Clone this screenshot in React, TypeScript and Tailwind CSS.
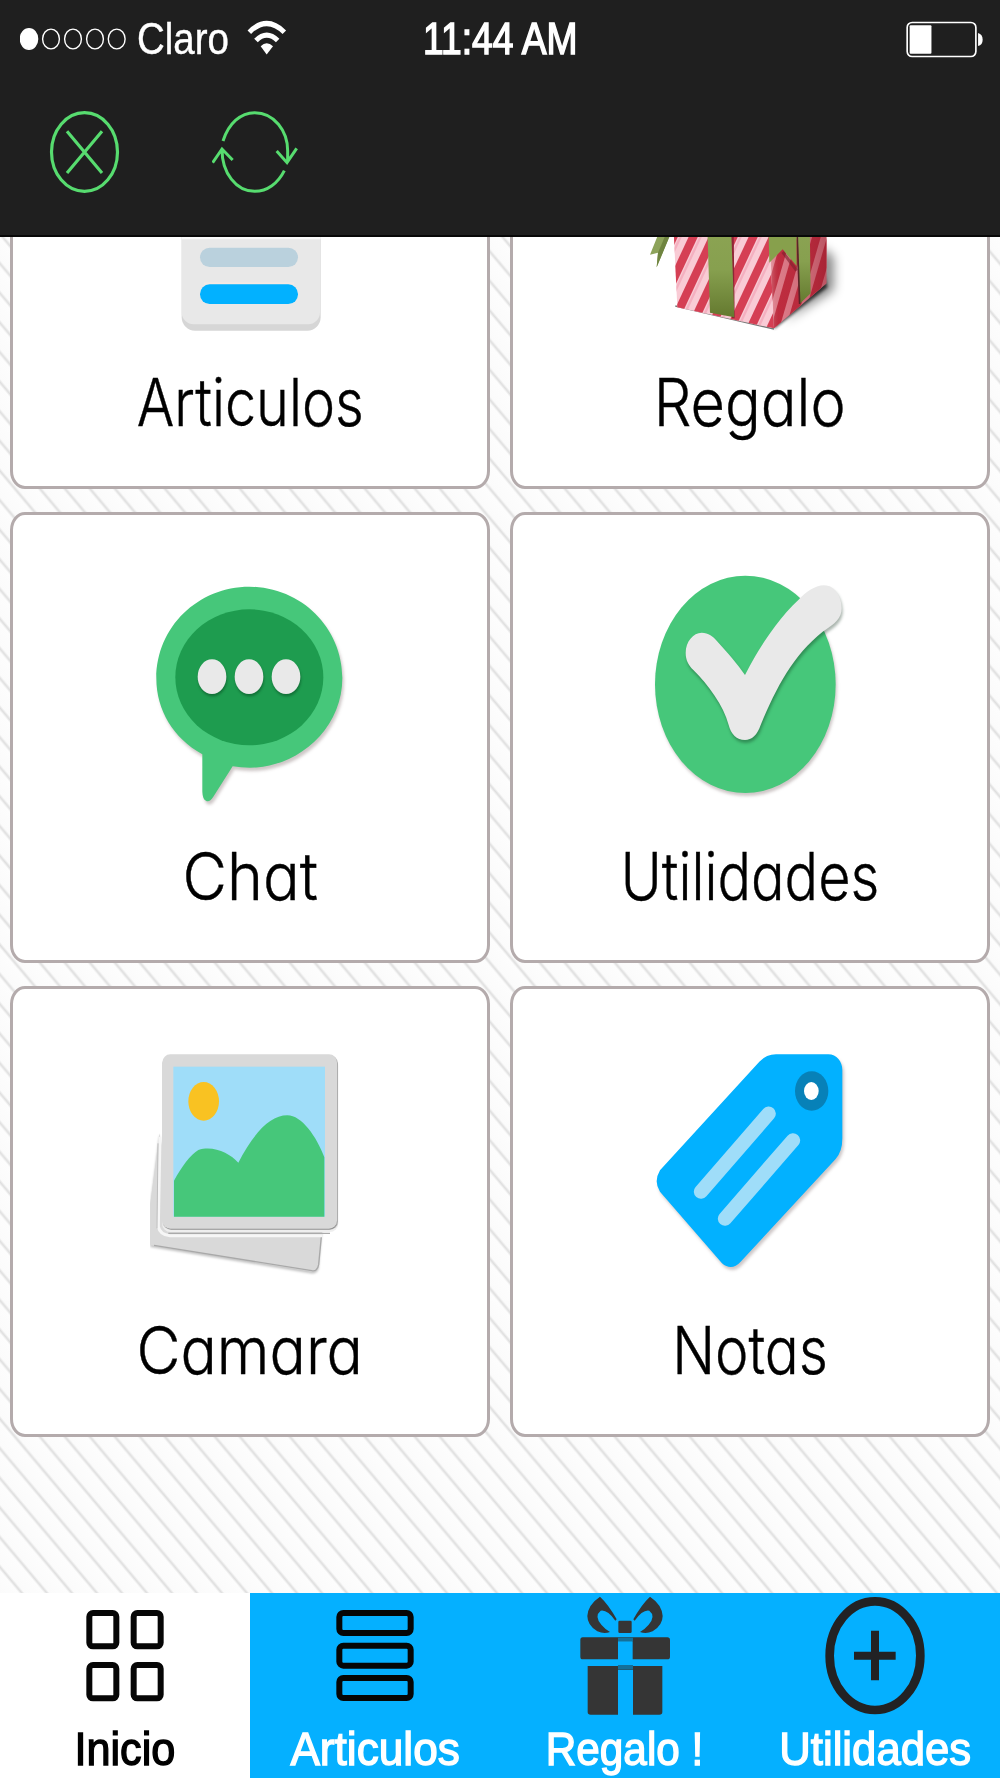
import React from "react";

function ArticlesArt() {
  return (
    <svg viewBox="450 -402 600 720" className="h-[240px] w-[200px]">
      <rect x="545" y="-300" width="417" height="602" rx="40" fill="#d6d6d6" />
      <rect x="545" y="-310" width="415" height="593" rx="36" fill="#e8e8e8" />
      <path d="M545 24H962" stroke="#fafafa" strokeWidth="8" />
      <rect x="600" y="53" width="294" height="58" rx="29" fill="#bad1dd" />
      <path d="M612 160H882" stroke="#f6e9e3" strokeWidth="5" />
      <rect x="600" y="163" width="294" height="59" rx="29" fill="#02b1ff" />
    </svg>
  );
}

function PresentArt() {
  const front = [380, 440, 500, 560, 620, 680, 740, 800, 860];
  const side = [770, 815, 860, 905, 950, 995];
  return (
    <svg viewBox="450 -402 600 720" className="h-[240px] w-[200px] overflow-visible">
      <defs>
        <clipPath id="gift-front">
          <path d="M516 -100L532 232L822 295L803 -100Z" />
        </clipPath>
        <clipPath id="gift-side">
          <path d="M803 -100L822 295L980 160V-100Z" />
        </clipPath>
        <linearGradient id="ribbon" x1="0" y1="0" x2="0" y2="1">
          <stop offset="0" stopColor="#8fa656" />
          <stop offset="0.6" stopColor="#87a04f" />
          <stop offset="1" stopColor="#64792f" />
        </linearGradient>
        <linearGradient id="side-shade" x1="0" y1="0" x2="1" y2="0">
          <stop offset="0" stopColor="#fff" stopOpacity="0.45" />
          <stop offset="0.18" stopColor="#c23246" stopOpacity="0.1" />
          <stop offset="1" stopColor="#8c1a2a" stopOpacity="0.45" />
        </linearGradient>
        <filter id="gift-blur" x="-50%" y="-50%" width="200%" height="200%">
          <feGaussianBlur stdDeviation="16" />
        </filter>
        <filter id="gift-blur-tight" x="-50%" y="-50%" width="200%" height="200%">
          <feGaussianBlur stdDeviation="5" />
        </filter>
      </defs>
      <path d="M850 275L1000 180V80L960 50V150Z" fill="#000" opacity="0.5" filter="url(#gift-blur)" />
      <path d="M822 297L982 172L970 120L820 250Z" fill="#000" opacity="0.7" filter="url(#gift-blur-tight)" />
      <path d="M526 228L822 297" stroke="#777" strokeWidth="5" />
      <g clipPath="url(#gift-front)">
        <rect x="500" y="-100" width="340" height="400" fill="#f9cbd5" />
        {front.map((x) => (
          <path key={x} d={`M${x} 320L${x + 210} -130`} stroke="#d53f54" strokeWidth="25" />
        ))}
        {front.map((x) => (
          <path key={x} d={`M${x + 22} 320L${x + 232} -130`} stroke="#f4b0c0" strokeWidth="7" />
        ))}
      </g>
      <g clipPath="url(#gift-side)">
        <rect x="795" y="-100" width="190" height="400" fill="#df8591" />
        {side.map((x) => (
          <path key={x} d={`M${x} 330L${x + 130} -120`} stroke="#bd2c3e" strokeWidth="25" />
        ))}
        <rect x="803" y="-100" width="180" height="400" fill="url(#side-shade)" />
      </g>
      <path d="M690 0L696 265H704L701 0Z" fill="#8e2535" />
      <path d="M619 -100L630 248L703 262L690 -100Z" fill="url(#ribbon)" />
      <path d="M891 -100L898 223L932 190L928 -100Z" fill="url(#ribbon)" />
      <path d="M891 0L899 222" stroke="#5b2529" strokeWidth="5" />
      <path d="M848 66L890 122" stroke="#7c1f2c" strokeWidth="9" opacity="0.6" />
      <path d="M804 -60H889L890 108L848 58L808 98Z" fill="#87a04c" />
      <path d="M480 0H516L470 112L474 68L450 74Z" fill="#8da35a" />
      <path d="M511 14L470 112L474 68L497 14Z" fill="#6f8440" />
    </svg>
  );
}

function ChatArt() {
  return (
    <svg viewBox="450 210 600 720" className="h-[240px] w-[200px]">
      <g className="[filter:drop-shadow(5px_10px_4px_rgba(60,30,30,0.25))]">
        <path
          d="M748 260C905 260 1027 385 1027 533C1027 690 890 803 750 803Q722 803 698 799L640 890Q628 908 618 902Q608 898 607 875V763C520 715 469 630 469 535C469 380 595 260 748 260Z"
          fill="#46c77a"
        />
      </g>
      <ellipse cx="748" cy="532" rx="222" ry="204" fill="#1e9c4f" />
      <g fill="#e9e9e9" className="[filter:drop-shadow(2px_7px_3px_rgba(0,50,20,0.4))]">
        <ellipse cx="636" cy="530" rx="43" ry="52" />
        <ellipse cx="747" cy="530" rx="43" ry="52" />
        <ellipse cx="858" cy="530" rx="43" ry="52" />
      </g>
    </svg>
  );
}

function CheckArt() {
  return (
    <svg viewBox="450 210 600 720" className="h-[240px] w-[200px]">
      <ellipse
        cx="736"
        cy="553"
        rx="271"
        ry="326"
        fill="#46c77a"
        className="[filter:drop-shadow(4px_9px_4px_rgba(60,30,30,0.25))]"
      />
      <path
        d="M605 398C625 398 640 410 650 422C685 460 712 492 735 525C770 455 830 360 895 300C915 278 945 256 972 256C1005 256 1025 290 1025 325C1025 355 1005 372 968 395C880 465 830 560 782 675C772 705 755 720 735 720C710 720 693 703 686 675C670 615 625 555 580 510C565 495 557 480 557 458C557 425 580 398 605 398Z"
        fill="#e9e9e9"
        className="[filter:drop-shadow(3px_9px_4px_rgba(10,40,20,0.35))]"
      />
    </svg>
  );
}

function PhotosArt() {
  return (
    <svg viewBox="450 222 600 720" className="h-[240px] w-[200px]">
      <g className="[filter:drop-shadow(0px_5px_3px_rgba(0,0,0,0.25))]">
        <path d="M478 490L451 700V826L935 905Q952 906 956 890L966 780L500 600Z" fill="#d9d9d9" />
      </g>
      <path d="M462 826L935 902Q952 906 956 884L964 800" fill="none" stroke="#a9a9a9" strokeWidth="4" />
      <path d="M480 500L475 770Q480 795 510 797H966" fill="none" stroke="#f6f6f6" strokeWidth="9" />
      <path d="M474 520L471 775" fill="none" stroke="#bdbdbd" strokeWidth="3" />
      <path d="M505 790H990" stroke="#aaa" strokeWidth="4" />
      <rect x="486" y="262" width="529" height="524" rx="26" fill="#eeeeee" />
      <rect
        x="487"
        y="253"
        width="524"
        height="523"
        rx="24"
        fill="#d9d9d9"
        className="[filter:drop-shadow(2px_3px_1px_rgba(0,0,0,0.4))]"
      />
      <rect x="520" y="290" width="455" height="450" fill="#9fddf9" />
      <ellipse cx="611" cy="394" rx="46" ry="58" fill="#f9c222" />
      <path
        d="M522 632C545 590 570 555 595 540C640 525 690 550 715 578C760 490 810 436 862 436C905 436 950 500 973 562V740H522Z"
        fill="#46c77a"
      />
    </svg>
  );
}

function TagArt() {
  return (
    <svg viewBox="450 222 600 720" className="h-[240px] w-[200px]">
      <path
        d="M828 253H985C1010 253 1027 275 1027 300V505Q1027 545 1007 567L722 875Q695 905 666 880L480 665Q460 635 480 601L778 275Q800 253 828 253Z"
        fill="#02b1ff"
        className="[filter:drop-shadow(5px_9px_4px_rgba(60,30,30,0.25))]"
      />
      <ellipse cx="935" cy="363" rx="50" ry="59" fill="#0781b8" />
      <ellipse cx="934" cy="363" rx="22" ry="27" fill="#fff" />
      <g stroke="#9fddf9" strokeLinecap="round" strokeWidth="43">
        <path d="M806 431L603 665" />
        <path d="M879 511L675 746" />
      </g>
    </svg>
  );
}

const tiles = [
  { label: "Articulos", art: <ArticlesArt />, fit: "scale-x-[0.845]" },
  { label: "Regalo", art: <PresentArt />, fit: "scale-x-[0.9]" },
  { label: "Chat", art: <ChatArt />, fit: "scale-x-[0.925]" },
  { label: "Utilidades", art: <CheckArt />, fit: "scale-x-[0.845]" },
  { label: "Camara", art: <PhotosArt />, fit: "scale-x-[0.915]" },
  { label: "Notas", art: <TagArt />, fit: "scale-x-[0.855]" },
];

function HomeGlyph() {
  return (
    <svg viewBox="195 99 360 372" className="h-[124px] w-[120px]" fill="none" stroke="#060606" strokeWidth="18">
      <rect x="268" y="159" width="81" height="100" rx="11" />
      <rect x="401" y="159" width="81" height="100" rx="11" />
      <rect x="268" y="315" width="81" height="100" rx="11" />
      <rect x="401" y="315" width="81" height="100" rx="11" />
    </svg>
  );
}

function ListGlyph() {
  return (
    <svg viewBox="945 99 360 372" className="h-[124px] w-[120px]" fill="none" stroke="#060606" strokeWidth="18">
      <rect x="1018" y="159" width="214" height="60" rx="12" />
      <rect x="1018" y="257" width="214" height="60" rx="12" />
      <rect x="1018" y="354" width="214" height="60" rx="12" />
    </svg>
  );
}

function GiftGlyph() {
  return (
    <svg viewBox="195 99 360 372" className="h-[124px] w-[120px]" fill="#353535">
      <path d="M300 110Q326 134 350 178L346 182Q322 148 302 152Q282 168 304 194Q314 206 330 216Q312 223 292 214Q262 196 262 168Q264 134 300 110Z" />
      <path d="M450 110Q424 134 400 178L404 182Q428 148 448 152Q468 168 446 194Q436 206 420 216Q438 223 458 214Q488 196 488 168Q486 134 450 110Z" />
      <rect x="355" y="182" width="40" height="37" rx="4" />
      <path d="M248 232H502Q510 232 510 240V290Q510 298 502 298H398V244H354V298H248Q241 298 241 290V240Q241 232 248 232Z" />
      <path d="M263 318H487V456Q487 464 478 464H399V330H354V464H272Q263 464 263 456Z" />
      <path d="M354 322H399" stroke="#14709a" strokeWidth="14" />
      <path d="M354 238H399" stroke="#14709a" strokeWidth="10" />
    </svg>
  );
}

function PlusGlyph() {
  return (
    <svg viewBox="945 99 360 372" className="h-[124px] w-[120px]" fill="none" stroke="#222224" strokeWidth="26">
      <ellipse cx="1125" cy="287" rx="136" ry="163" />
      <path d="M1125 212V361M1062 287H1187" strokeWidth="24" />
    </svg>
  );
}

const tabs = [
  { label: "Inicio", glyph: <HomeGlyph />, tone: "bg-white text-black", fit: "scale-x-[0.92]" },
  { label: "Articulos", glyph: <ListGlyph />, tone: "bg-[#05b0ff] text-white", fit: "scale-x-[0.94]" },
  { label: "Regalo !", glyph: <GiftGlyph />, tone: "bg-[#05b0ff] text-white", fit: "scale-x-[0.9]" },
  { label: "Utilidades", glyph: <PlusGlyph />, tone: "bg-[#05b0ff] text-white", fit: "scale-x-[0.93]" },
];

function StatusBar() {
  return (
    <div className="grid h-[76px] grid-cols-3 items-center font-['Liberation_Sans',sans-serif] leading-[78px] text-white">
      <div className="flex items-center pl-[20px]">
        <svg viewBox="0 0 106 22" className="h-[22px] w-[106px] shrink-0" fill="none" stroke="#fff" strokeWidth="1.4">
          <ellipse cx="9" cy="11" rx="8.6" ry="10.2" fill="#fff" />
          <ellipse cx="31" cy="11" rx="8.4" ry="9.9" />
          <ellipse cx="53" cy="11" rx="8.4" ry="9.9" />
          <ellipse cx="75" cy="11" rx="8.4" ry="9.9" />
          <ellipse cx="96.700" cy="11" rx="8.4" ry="9.9" />
        </svg>
        <span className="ml-[11px] w-[110px] shrink-0 origin-left scale-x-[0.875] text-[44px] [-webkit-text-stroke:0.4px_#fff]">
          Claro
        </span>
        <svg viewBox="740 55 120 110" className="-mt-[3px] h-[37px] w-[40px] shrink-0" fill="none" stroke="#fff">
          <path d="M747 94Q799 42 852 94" strokeWidth="15" />
          <path d="M767 119Q799 87 832 119" strokeWidth="15" />
          <path d="M781 136Q799 119 818 136L799 161Z" fill="#fff" stroke="none" />
        </svg>
      </div>
      <div className="flex justify-center">
        <span className="scale-x-[0.855] text-[43.500px] whitespace-nowrap [-webkit-text-stroke:1.5px_#fff]">11:44 AM</span>
      </div>
      <div className="flex items-center justify-end pr-[17px]">
        <svg viewBox="1218 58 231 112" className="h-[37px] w-[77px]" fill="none">
          <rect x="1220.500" y="62.500" width="208" height="103" rx="15" stroke="#fff" strokeWidth="5" />
          <rect x="1228" y="71" width="66" height="86" rx="3" fill="#fff" />
          <path d="M1435 94Q1449 98 1449 114Q1449 131 1435 134Z" fill="#fff" />
        </svg>
      </div>
    </div>
  );
}

function Toolbar() {
  return (
    <div className="flex items-start gap-[91px] pt-[33px] pl-[48px]">
      <button aria-label="Cerrar">
        <svg viewBox="144 327 219 258" className="h-[86px] w-[73px]" fill="none" stroke="#57dc6f" strokeWidth="9.500">
          <ellipse cx="253.500" cy="456" rx="99" ry="118" />
          <path d="M201 394L306 519M306 394L201 519" />
        </svg>
      </button>
      <button aria-label="Actualizar">
        <svg viewBox="636 327 258 258" className="h-[86px] w-[86px]" fill="none" stroke="#57dc6f" strokeWidth="9">
          <path d="M669 423C686 370 722 338 764 338C822 338 863 392 863 452V486M830 453L861 488L890 445" />
          <path d="M853 512C834 550 802 574 764 574C708 574 666 518 666 449M638 488L666 447L698 480" />
        </svg>
      </button>
    </div>
  );
}

export default function App() {
  return (
    <div className="flex h-[1778px] w-[1000px] flex-col overflow-hidden bg-[linear-gradient(to_top_right,#dedede_0%,#fbfbfb_6%,#fdfdfd_44%,#dedede_50%,#fbfbfb_56%,#fdfdfd_94%,#dedede_100%)] bg-[length:25px_29.633px] bg-[position:0_-3px]">
      <header className="h-[237px] shrink-0 border-b-2 border-[#080808] bg-[#1f1f1f]">
        <StatusBar />
        <Toolbar />
      </header>

      <main className="h-[1356px] shrink-0 overflow-hidden">
        <div className="-mt-[199px] grid auto-rows-[451px] grid-cols-2 gap-x-[20px] gap-y-[23px] px-[10px]">
          {tiles.map((tile) => (
            <section
              key={tile.label}
              className="flex flex-col items-center rounded-[15px/18px] border-[3px] border-[#b4abac] bg-white pt-[55px]"
            >
              {tile.art}
              <span
                className={`font-['Inter',sans-serif] text-[66px] leading-[133px] font-light whitespace-nowrap text-black [-webkit-text-stroke:0.4px_#000] [font-feature-settings:'cv11','ss03'] ${tile.fit}`}
              >
                {tile.label}
              </span>
            </section>
          ))}
        </div>
      </main>

      <nav className="grid flex-1 grid-cols-4 font-['Liberation_Sans',sans-serif]">
        {tabs.map((tab) => (
          <button key={tab.label} className={`flex flex-col items-center ${tab.tone}`}>
            {tab.glyph}
            <span
              className={`text-[47px] leading-[63px] whitespace-nowrap [-webkit-text-stroke:1.4px_currentColor] ${tab.fit}`}
            >
              {tab.label}
            </span>
          </button>
        ))}
      </nav>
    </div>
  );
}
